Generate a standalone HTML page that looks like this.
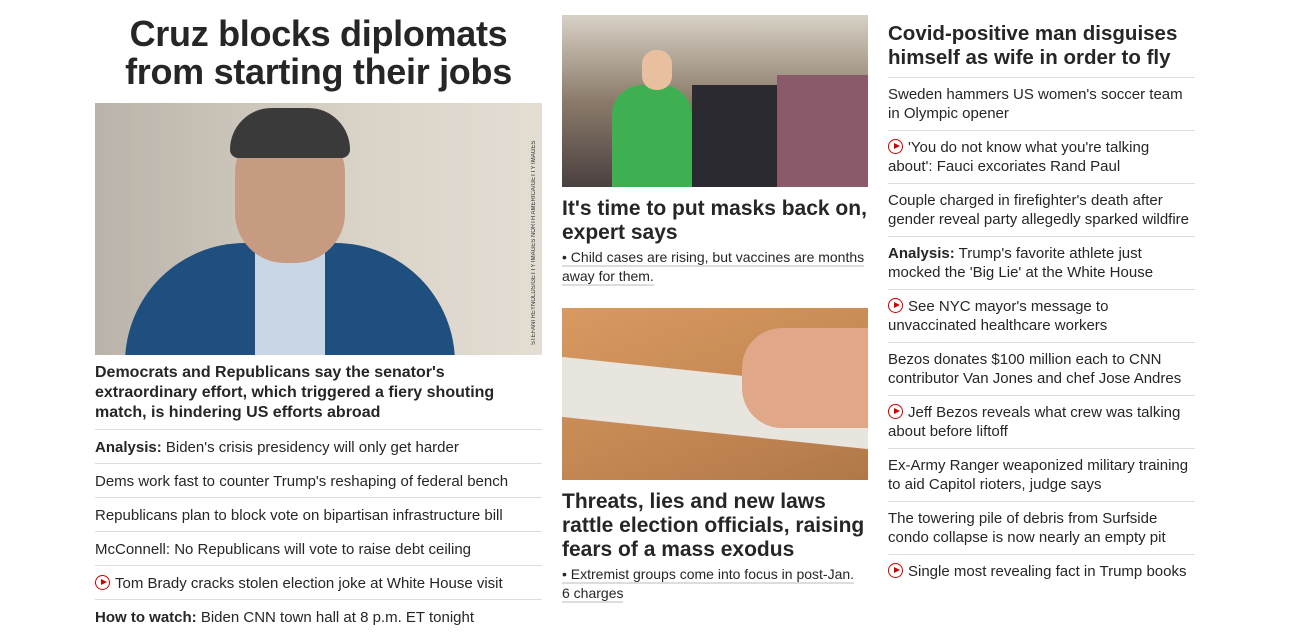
<!DOCTYPE html>
<html><head><meta charset="utf-8"><style>
*{margin:0;padding:0;box-sizing:border-box}
body{width:1290px;height:643px;background:#fff;font-family:"Liberation Sans",Arial,sans-serif;color:#262626;position:relative;overflow:hidden}
.a{position:absolute}
h1{font-size:36px;font-weight:700;line-height:38px;text-align:center;letter-spacing:-0.3px;color:#262626}
.b{font-weight:700}
.li{font-size:15px;line-height:19px;border-top:1px solid #ddd;padding-top:8px}
.c1 .li{height:34px}
.c3 .li{height:53px;padding-top:7px}
.h2{font-size:21px;font-weight:700;line-height:24px}
.sub{font-size:14px;line-height:19px}
.sub span{border-bottom:2px solid #ddd}
.p{display:inline-block;width:15px;height:15px;border:1.6px solid #c00;border-radius:50%;position:relative;vertical-align:-2px;margin-right:5px}
.p:after{content:"";position:absolute;left:4.5px;top:2.6px;border-left:6px solid #c00;border-top:3.6px solid transparent;border-bottom:3.6px solid transparent}
</style></head><body>
<div class="a c1" style="left:95px;top:15px;width:447px">
<h1>Cruz blocks diplomats<br>from starting their jobs</h1>
<div style="margin-top:12px;height:252px;position:relative;background:linear-gradient(90deg,#b9b3a9,#d9d3c8 60%,#e3ddd3);overflow:hidden">
<div class="a" style="left:30px;top:140px;width:330px;height:160px;border-radius:120px 120px 0 0;background:#1f4f7f"></div>
<div class="a" style="left:160px;top:140px;width:70px;height:120px;background:#c9d7e5"></div>
<div class="a" style="left:140px;top:20px;width:110px;height:140px;border-radius:50px;background:#c79a82"></div>
<div class="a" style="left:135px;top:5px;width:120px;height:50px;border-radius:50px 50px 10px 10px;background:#3a3a3a"></div>
<div class="a" style="left:436px;top:2px;width:10px;height:240px;font-size:6px;writing-mode:vertical-rl;transform:rotate(180deg);color:#333">STEFANI REYNOLDS/GETTY IMAGES NORTH AMERICA/GETTY IMAGES</div>
</div>
<div style="font-size:16px;font-weight:700;line-height:20px;margin-top:8px;height:66px">Democrats and Republicans say the senator's extraordinary effort, which triggered a fiery shouting match, is hindering US efforts abroad</div>
<div class="li"><span class="b">Analysis:</span> Biden's crisis presidency will only get harder</div>
<div class="li">Dems work fast to counter Trump's reshaping of federal bench</div>
<div class="li">Republicans plan to block vote on bipartisan infrastructure bill</div>
<div class="li">McConnell: No Republicans will vote to raise debt ceiling</div>
<div class="li"><span class="p"></span>Tom Brady cracks stolen election joke at White House visit</div>
<div class="li"><span class="b">How to watch:</span> Biden CNN town hall at 8 p.m. ET tonight</div>
</div>
<div class="a" style="left:562px;top:15px;width:306px">
<div style="height:172px;background:linear-gradient(180deg,#d8d2c6,#8b7b6a 50%,#4a4040);position:relative;overflow:hidden">
<div class="a" style="left:50px;top:70px;width:80px;height:102px;background:#3fb052;border-radius:30px 30px 0 0"></div>
<div class="a" style="left:80px;top:35px;width:30px;height:40px;background:#e8c0a0;border-radius:14px"></div>
<div class="a" style="left:130px;top:70px;width:90px;height:102px;background:#2a2a30"></div>
<div class="a" style="left:215px;top:60px;width:91px;height:112px;background:#8a5a6a"></div>
</div>
<div class="h2" style="margin-top:10px">It's time to put masks back on, expert says</div>
<div class="sub" style="margin-top:3px"><span>• Child cases are rising, but vaccines are months</span><br><span>away for them.</span></div>
<div style="margin-top:22px;height:172px;background:linear-gradient(160deg,#d89a60,#c88a55 50%,#b07848);position:relative;overflow:hidden">
<div class="a" style="left:0;top:65px;width:306px;height:60px;background:#e8e4de;transform:skewY(6deg)"></div>
<div class="a" style="left:180px;top:20px;width:130px;height:100px;background:#e0a888;border-radius:40px 0 0 40px"></div>
</div>
<div class="h2" style="margin-top:10px">Threats, lies and new laws<br>rattle election officials, raising fears of a mass exodus</div>
<div class="sub" style="margin-top:3px"><span>• Extremist groups come into focus in post-Jan.</span><br><span>6 charges</span></div>
</div>
<div class="a c3" style="left:888px;top:22px;width:307px">
<div class="h2" style="height:55px;font-size:20.5px">Covid-positive man disguises himself as wife in order to fly</div>
<div class="li">Sweden hammers US women's soccer team in Olympic opener</div>
<div class="li"><span class="p"></span>'You do not know what you're talking about': Fauci excoriates Rand Paul</div>
<div class="li">Couple charged in firefighter's death after gender reveal party allegedly sparked wildfire</div>
<div class="li"><span class="b">Analysis:</span> Trump's favorite athlete just mocked the 'Big Lie' at the White House</div>
<div class="li"><span class="p"></span>See NYC mayor's message to unvaccinated healthcare workers</div>
<div class="li">Bezos donates $100 million each to CNN contributor Van Jones and chef Jose Andres</div>
<div class="li"><span class="p"></span>Jeff Bezos reveals what crew was talking about before liftoff</div>
<div class="li">Ex-Army Ranger weaponized military training to aid Capitol rioters, judge says</div>
<div class="li">The towering pile of debris from Surfside condo collapse is now nearly an empty pit</div>
<div class="li"><span class="p"></span>Single most revealing fact in Trump books</div>
</div>
</body></html>
